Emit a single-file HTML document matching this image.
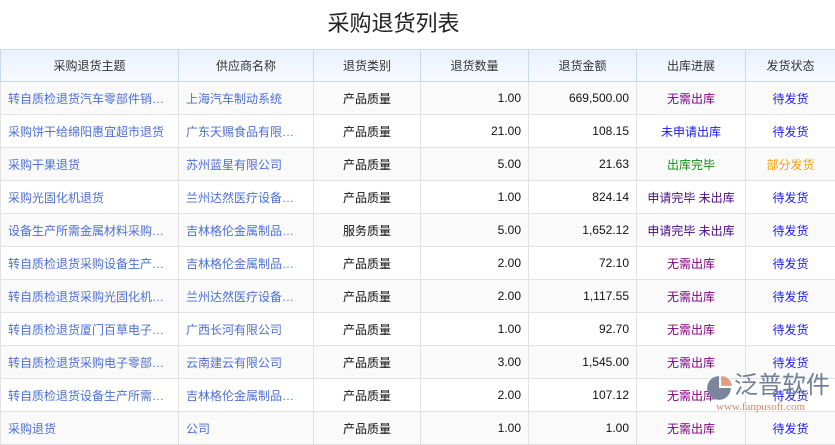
<!DOCTYPE html>
<html><head><meta charset="utf-8"><style>
body{margin:0;width:835px;height:419px;overflow:hidden;background:#fff;font-family:"Liberation Sans","Noto Sans CJK SC",sans-serif;font-size:12px;position:relative}
h1{margin:0;position:absolute;top:9px;left:0;width:787px;text-align:center;font-size:22px;font-weight:normal;color:#222;line-height:30px}
table{position:absolute;top:49px;left:0;border-collapse:collapse;table-layout:fixed;width:835px}
th{height:31px;font-weight:normal;color:#333;background:linear-gradient(#eaf1fd,#f8fbff);border:1px solid #c6d9ee;padding:0}
td{height:32px;border:1px solid #e2e2e2;padding:0 7px;white-space:nowrap;overflow:hidden;text-overflow:ellipsis;color:#111}
tr:nth-child(even) td{background:#fafafa}
.l{color:#4d6fd4}.c{text-align:center}.r{text-align:right}
.p{color:#800080}.b{color:#1a1aff}.g{color:#138a13}.d{color:#4a0a80}.o{color:#f5a000}
.logo{position:absolute;top:372px;font-size:24px;color:#6f7f99;white-space:nowrap;line-height:28px}
.url{position:absolute;left:716px;top:401px;font-size:11px;color:#d08a6a;font-family:"Liberation Serif",serif;white-space:nowrap}
</style></head><body>
<h1>采购退货列表</h1>
<table>
<colgroup><col style="width:178px"><col style="width:135px"><col style="width:107px"><col style="width:108px"><col style="width:108px"><col style="width:109px"><col style="width:90px"></colgroup>
<tr><th>采购退货主题</th><th>供应商名称</th><th>退货类别</th><th>退货数量</th><th>退货金额</th><th>出库进展</th><th>发货状态</th></tr>
<tr><td class="l">转自质检退货汽车零部件销…</td><td class="l">上海汽车制动系统</td><td class="c">产品质量</td><td class="r">1.00</td><td class="r">669,500.00</td><td class="c p">无需出库</td><td class="c b">待发货</td></tr>
<tr><td class="l">采购饼干给绵阳惠宜超市退货</td><td class="l">广东天赐食品有限…</td><td class="c">产品质量</td><td class="r">21.00</td><td class="r">108.15</td><td class="c b">未申请出库</td><td class="c b">待发货</td></tr>
<tr><td class="l">采购干果退货</td><td class="l">苏州蓝星有限公司</td><td class="c">产品质量</td><td class="r">5.00</td><td class="r">21.63</td><td class="c g">出库完毕</td><td class="c o">部分发货</td></tr>
<tr><td class="l">采购光固化机退货</td><td class="l">兰州达然医疗设备…</td><td class="c">产品质量</td><td class="r">1.00</td><td class="r">824.14</td><td class="c d">申请完毕 未出库</td><td class="c b">待发货</td></tr>
<tr><td class="l">设备生产所需金属材料采购…</td><td class="l">吉林格伦金属制品…</td><td class="c">服务质量</td><td class="r">5.00</td><td class="r">1,652.12</td><td class="c d">申请完毕 未出库</td><td class="c b">待发货</td></tr>
<tr><td class="l">转自质检退货采购设备生产…</td><td class="l">吉林格伦金属制品…</td><td class="c">产品质量</td><td class="r">2.00</td><td class="r">72.10</td><td class="c p">无需出库</td><td class="c b">待发货</td></tr>
<tr><td class="l">转自质检退货采购光固化机…</td><td class="l">兰州达然医疗设备…</td><td class="c">产品质量</td><td class="r">2.00</td><td class="r">1,117.55</td><td class="c p">无需出库</td><td class="c b">待发货</td></tr>
<tr><td class="l">转自质检退货厦门百草电子…</td><td class="l">广西长河有限公司</td><td class="c">产品质量</td><td class="r">1.00</td><td class="r">92.70</td><td class="c p">无需出库</td><td class="c b">待发货</td></tr>
<tr><td class="l">转自质检退货采购电子零部…</td><td class="l">云南建云有限公司</td><td class="c">产品质量</td><td class="r">3.00</td><td class="r">1,545.00</td><td class="c p">无需出库</td><td class="c b">待发货</td></tr>
<tr><td class="l">转自质检退货设备生产所需…</td><td class="l">吉林格伦金属制品…</td><td class="c">产品质量</td><td class="r">2.00</td><td class="r">107.12</td><td class="c p">无需出库</td><td class="c b">待发货</td></tr>
<tr><td class="l">采购退货</td><td class="l">公司</td><td class="c">产品质量</td><td class="r">1.00</td><td class="r">1.00</td><td class="c p">无需出库</td><td class="c b">待发货</td></tr>
</table>
<svg style="position:absolute;left:705px;top:374px" width="28" height="28" viewBox="0 0 26 26"><path d="M13 2A11 11 0 1 0 24 13L13 13Z" fill="#7a869c"/><path d="M15 2A10 10 0 0 1 25 11L15 11Z" fill="#e0a080"/></svg>
<div class="logo" style="left:734px">泛普软件</div>
<div class="url">www.fanpusoft.com</div>
</body></html>
